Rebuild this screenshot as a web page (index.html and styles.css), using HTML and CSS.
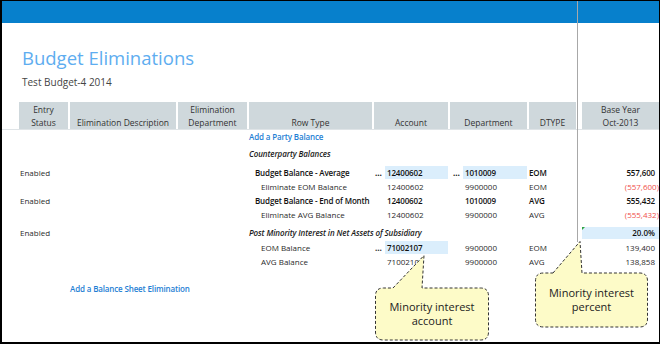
FILE: index.html
```html
<!DOCTYPE html>
<html>
  <head>
    <title>Budget Eliminations</title>
    <meta name="viewport" content="width=device-width, initial-scale=1" />
    <link rel="stylesheet" href="styles.css">
  </head>
  <body>
    <div class="screen">
      <div class="topbar"></div>

      <div class="page-head">
        <h1>Budget Eliminations</h1>
        <p class="sub">Test Budget-4 2014</p>
      </div>

      <div class="head-wrap">
        <div class="grid head">
          <div>Entry<br />Status</div>
          <div>Elimination Description</div>
          <div>Elimination<br />Department</div>
          <div>Row Type</div>
          <div>Account</div>
          <div>Department</div>
          <div>DTYPE</div>
          <div class="gap"></div>
          <div>Base Year<br />Oct-2013</div>
        </div>
      </div>

      <div class="rows">
        <div class="grid row r-first">
          <div class="c-type link">Add a Party Balance</div>
        </div>
        <div class="grid row r-group">
          <div class="c-type group">Counterparty Balances</div>
        </div>
        <div class="grid row strong r-sp">
          <div class="c-status">Enabled</div>
          <div class="c-type lvl1">Budget Balance - Average</div>
          <div class="c-acct"><span class="dots">…</span><span class="val pick">12400602</span></div>
          <div class="c-dept"><span class="dots">…</span><span class="val pick">1010009</span></div>
          <div class="c-dtype">EOM</div>
          <div class="c-num">557,600</div>
        </div>
        <div class="grid row">
          <div class="c-type lvl2">Eliminate EOM Balance</div>
          <div class="c-acct"><span class="dots"></span><span class="val">12400602</span></div>
          <div class="c-dept"><span class="dots"></span><span class="val">9900000</span></div>
          <div class="c-dtype">EOM</div>
          <div class="c-num"><span class="neg">(557,600)</span></div>
        </div>
        <div class="grid row strong">
          <div class="c-status">Enabled</div>
          <div class="c-type lvl1">Budget Balance - End of Month</div>
          <div class="c-acct"><span class="dots"></span><span class="val">12400602</span></div>
          <div class="c-dept"><span class="dots"></span><span class="val">1010009</span></div>
          <div class="c-dtype">AVG</div>
          <div class="c-num">555,432</div>
        </div>
        <div class="grid row">
          <div class="c-type lvl2">Eliminate AVG Balance</div>
          <div class="c-acct"><span class="dots"></span><span class="val">12400602</span></div>
          <div class="c-dept"><span class="dots"></span><span class="val">9900000</span></div>
          <div class="c-dtype">AVG</div>
          <div class="c-num"><span class="neg">(555,432)</span></div>
        </div>
        <div class="grid row r-sp2">
          <div class="c-status">Enabled</div>
          <div class="c-type wide group">Post Minority Interest in Net Assets of Subsidiary</div>
          <div class="c-num pct">20.0%</div>
        </div>
        <div class="grid row r-sp3">
          <div class="c-type lvl2">EOM Balance</div>
          <div class="c-acct"><span class="dots">…</span><span class="val pick bold">71002107</span></div>
          <div class="c-dept"><span class="dots"></span><span class="val">9900000</span></div>
          <div class="c-dtype">EOM</div>
          <div class="c-num">139,400</div>
        </div>
        <div class="grid row">
          <div class="c-type lvl2">AVG Balance</div>
          <div class="c-acct"><span class="dots"></span><span class="val">71002107</span></div>
          <div class="c-dept"><span class="dots"></span><span class="val">9900000</span></div>
          <div class="c-dtype">AVG</div>
          <div class="c-num">138,858</div>
        </div>
        <div class="grid row r-last">
          <div class="c-desc link">Add a Balance Sheet Elimination</div>
        </div>
      </div>

      <div class="freeze"></div>

      <div class="callout callout-account">
        <svg width="114" height="86" viewBox="0 0 114 86">
          <path d="M18 33 L49 0.5 L47 33 H105.5 Q113.5 33 113.5 41 V77 Q113.5 85 105.5 85 H8.5 Q0.5 85 0.5 77 V41 Q0.5 33 8.5 33 Z" />
        </svg>
        <div class="callout-text">Minority interest<br />account</div>
      </div>

      <div class="callout callout-percent">
        <svg width="113" height="87" viewBox="0 0 113 87">
          <path d="M18 32 L45 0.5 L47 32 H104.5 Q112.5 32 112.5 40 V78 Q112.5 86 104.5 86 H8.5 Q0.5 86 0.5 78 V40 Q0.5 32 8.5 32 Z" />
        </svg>
        <div class="callout-text">Minority interest<br />percent</div>
      </div>
    </div>
  </body>
</html>
```

FILE: styles.css
```css
html {
  font-family: "Open Sans", "Liberation Sans", sans-serif;
}

body {
  margin: 0;
}

.screen {
  position: relative;
  width: 660px;
  height: 344px;
  box-sizing: border-box;
  border: 1px solid #000;
  border-left-width: 2px;
  border-bottom-width: 2px;
  overflow: hidden;
  background-color: white;
  color: #2a2a2a;
}

.topbar {
  height: 22px;
  background-color: #0780cc;
}

.page-head {
  height: 79px;
  box-sizing: border-box;
  padding: 22px 0 0 20px;
}

h1 {
  margin: 0;
  font-size: 18.5px;
  line-height: 26px;
  font-weight: 400;
  color: #5eadf0;
}

.sub {
  margin: 4px 0 0;
  font-size: 10px;
  line-height: 14px;
  color: #444;
}

/* shared column layout */
.grid {
  display: grid;
  grid-template-columns: 49px 106px 69px 123px 74px 77px 47px 2px 77px;
  column-gap: 2px;
  padding-left: 17px;
}

.head-wrap {
  border-bottom: 1px solid #dfe4e7;
}

.head {
  height: 27px;
  font-size: 8.5px;
  line-height: 13px;
  color: #333;
}
.head > div {
  display: flex;
  align-items: flex-end;
  justify-content: center;
  text-align: center;
  background-color: #cfd8dc;
}
.head > .gap {
  background: none;
}

.row {
  height: 14px;
  font-size: 8px;
  line-height: 14px;
  white-space: nowrap;
}
.r-group {
  margin-top: 3px;
}
.r-sp {
  margin-top: 5px;
}
.r-sp2 {
  margin-top: 4px;
}
.r-sp3 {
  margin-top: 1px;
}
.r-last {
  margin-top: 13px;
}

.c-status {
  grid-column: 1;
  padding-left: 1px;
}
.c-desc {
  grid-column: 2;
}
.c-type {
  grid-column: 4;
}
.c-type.wide {
  grid-column: 4 / 8;
}
.c-acct {
  grid-column: 5;
  display: flex;
  padding-left: 1px;
}
.c-dept {
  grid-column: 6;
  display: flex;
  padding-left: 3px;
}
.c-dtype {
  grid-column: 7;
}
.c-num {
  grid-column: 9;
  text-align: right;
  padding-right: 4px;
}

.link {
  color: #1f7fd4;
  font-weight: 600;
  letter-spacing: -0.15px;
}
.group {
  font-weight: 600;
  font-style: italic;
  letter-spacing: -0.1px;
  color: #1a1a1a;
}
.lvl1 {
  padding-left: 6px;
}
.lvl2 {
  padding-left: 12px;
}

.strong .c-type,
.strong .c-acct,
.strong .c-dept,
.strong .c-dtype,
.strong .c-num,
.bold {
  font-weight: 600;
  letter-spacing: -0.15px;
  color: #111;
}

.dots {
  width: 10px;
  flex: none;
  font-weight: 700;
}
.val {
  flex: 1;
  padding-left: 2px;
}
.pick {
  height: 13px;
  line-height: 13px;
  background-color: #dbeefc;
}

.neg {
  margin-right: -4px;
  color: #f0504c;
  font-weight: 400;
  letter-spacing: 0;
}

.pct {
  position: relative;
  height: 12px;
  margin-top: 1px;
  line-height: 12px;
  background-color: #dbeefc;
  font-weight: 600;
  color: #111;
}
.pct::before {
  content: "";
  position: absolute;
  left: 0;
  top: 0;
  border-top: 3px solid #2fa344;
  border-right: 3px solid transparent;
}

/* frozen pane divider */
.freeze {
  position: absolute;
  left: 575px;
  top: 0;
  width: 1px;
  height: 241px;
  background-color: #a8a8a8;
}

.callout {
  position: absolute;
}
.callout svg {
  position: absolute;
  left: 0;
  top: 0;
}
.callout path {
  fill: #fdfbc8;
  stroke: #333;
  stroke-width: 1;
  stroke-dasharray: 3 2;
}
.callout-text {
  position: relative;
  display: flex;
  align-items: center;
  justify-content: center;
  text-align: center;
  font-size: 11px;
  line-height: 14px;
  color: #222;
}

.callout-account {
  left: 373px;
  top: 254px;
  width: 114px;
  height: 86px;
}
.callout-account .callout-text {
  margin-top: 33px;
  height: 52px;
}

.callout-percent {
  left: 533px;
  top: 240px;
  width: 113px;
  height: 87px;
}
.callout-percent .callout-text {
  margin-top: 32px;
  height: 54px;
}
```
